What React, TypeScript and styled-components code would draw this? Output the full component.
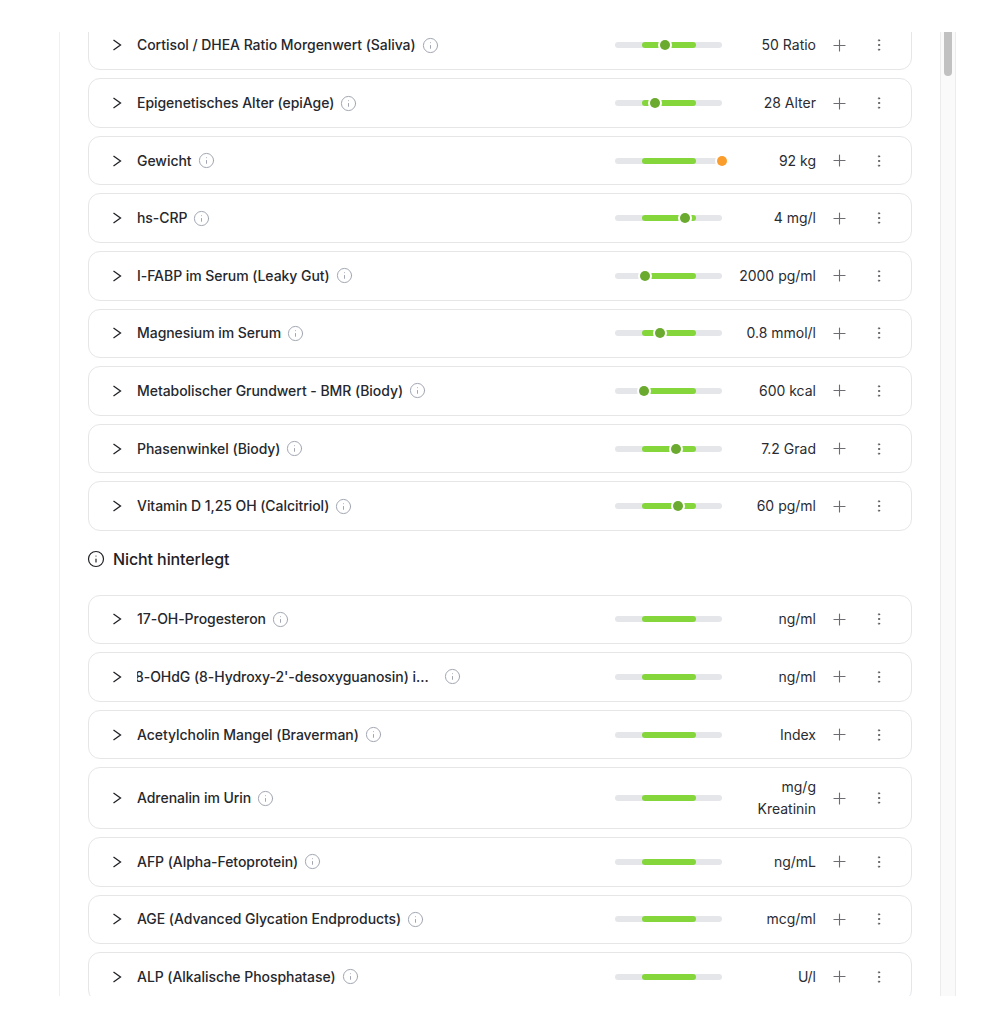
import { createGlobalStyle, styled } from "styled-components";
import { EllipsisVertical, Info, Plus } from "lucide-react";

const Global = createGlobalStyle`
  html, body {
    margin: 0;
    background: #fff;
  }
  body {
    font-family: Inter, "Liberation Sans", sans-serif;
    color: #1f2126;
  }
`;

const Page = styled.div`
  width: 1005px;
  height: 1028px;
  padding: 32px 49px 32px 59px;
  box-sizing: border-box;
  overflow: hidden;
`;

const Panel = styled.div`
  display: flex;
  height: 964px;
  border-left: 1px solid #f0f0f0;
  overflow: hidden;
`;

const Content = styled.div`
  flex: 1;
  min-width: 0;
  padding: 0 28px;
  overflow: hidden;
`;

const Scrolled = styled.div`
  margin-top: -11.4px;
`;

const Track = styled.div`
  width: 16px;
  flex-shrink: 0;
  padding-left: 3px;
  box-sizing: border-box;
  background: #fafafa;
  border-left: 1px solid #ececec;
  border-right: 1px solid #ececec;
`;

const Thumb = styled.div`
  width: 8px;
  height: 44px;
  background: #c1c1c1;
  border-radius: 0 0 4px 4px;
`;

const List = styled.div`
  display: flex;
  flex-direction: column;
  gap: 8px;
`;

const Card = styled.div`
  display: flex;
  align-items: center;
  min-height: 49.6px;
  padding: 7.8px 24px 7.8px 23px;
  box-sizing: border-box;
  background: #fff;
  border: 1px solid #e5e6e8;
  border-radius: 12px;
`;

const Toggle = styled.svg`
  flex-shrink: 0;
  width: 10px;
  height: 12px;
  fill: none;
  stroke: #1f2126;
  stroke-width: 1.3;
`;

const Name = styled.div`
  display: flex;
  align-items: center;
  gap: 6px;
  width: 478px;
  margin-left: 15px;
  font-size: 14px;
  font-weight: 500;
  line-height: 20px;
  letter-spacing: -0.05px;
  color: #26282d;
`;

const NameText = styled.span<{ $nudge?: boolean }>`
  overflow: hidden;
  white-space: nowrap;
  text-overflow: ellipsis;
  max-width: 301px;
  text-indent: ${(p) => (p.$nudge ? "-2px" : "0")};
`;

const Hint = styled(Info)`
  flex-shrink: 0;
  width: 17px;
  height: 17px;
  color: #a0a5b0;
`;

const Range = styled.div`
  position: relative;
  flex-shrink: 0;
  width: 107px;
  height: 6px;
  border-radius: 3px;
  background: #e5e6e9;
`;

const Band = styled.div`
  position: absolute;
  left: 27px;
  width: 54px;
  top: 0;
  bottom: 0;
  border-radius: 3px;
  background: #84d63a;
`;

const Dot = styled.div<{ $warn?: boolean }>`
  position: absolute;
  top: 50%;
  width: 10px;
  height: 10px;
  border-radius: 50%;
  transform: translate(-50%, -50%);
  background: ${(p) => (p.$warn ? "#fb9d2c" : "#6aaa2e")};
  box-shadow: 0 0 0 2px #fff;
`;

const Value = styled.div`
  flex: 1;
  min-width: 0;
  text-align: right;
  font-size: 14px;
  line-height: 22px;
  color: #2a2c31;
  padding-left: 12px;
`;

const Action = styled.div`
  display: flex;
  align-items: center;
  justify-content: center;
  flex-shrink: 0;
  width: 19px;
  margin-left: 14px;
  color: #6b6d72;
`;

const Menu = styled(Action)`
  width: 16px;
  margin-left: 22px;
  color: #55575c;
`;

const Heading = styled.h3`
  display: flex;
  align-items: center;
  gap: 8px;
  height: 63.6px;
  padding-bottom: 8px;
  box-sizing: border-box;
  margin: 0;
  font-size: 16px;
  font-weight: 500;
  letter-spacing: -0.1px;
  color: #1f2126;
`;

const HeadingIcon = styled(Info)`
  flex-shrink: 0;
  width: 18px;
  height: 18px;
  margin-left: -1px;
`;

type Row = { name: string; value?: string; at?: number; warn?: boolean; nudge?: boolean };

const filled: Row[] = [
  { name: "Cortisol / DHEA Ratio Morgenwert (Saliva)", value: "50 Ratio", at: 50 },
  { name: "Epigenetisches Alter (epiAge)", value: "28 Alter", at: 39.5 },
  { name: "Gewicht", value: "92 kg", at: 107, warn: true },
  { name: "hs-CRP", value: "4 mg/l", at: 70 },
  { name: "I-FABP im Serum (Leaky Gut)", value: "2000 pg/ml", at: 30 },
  { name: "Magnesium im Serum", value: "0.8 mmol/l", at: 45 },
  { name: "Metabolischer Grundwert - BMR (Biody)", value: "600 kcal", at: 29 },
  { name: "Phasenwinkel (Biody)", value: "7.2 Grad", at: 61 },
  { name: "Vitamin D 1,25 OH (Calcitriol)", value: "60 pg/ml", at: 63 },
];

const missing: Row[] = [
  { name: "17-OH-Progesteron", value: "ng/ml" },
  { name: "8-OHdG (8-Hydroxy-2'-desoxyguanosin) im Urin", value: "ng/ml", nudge: true },
  { name: "Acetylcholin Mangel (Braverman)", value: "Index" },
  { name: "Adrenalin im Urin", value: "mg/g Kreatinin" },
  { name: "AFP (Alpha-Fetoprotein)", value: "ng/mL" },
  { name: "AGE (Advanced Glycation Endproducts)", value: "mcg/ml" },
  { name: "ALP (Alkalische Phosphatase)", value: "U/l" },
];

function Marker({ row }: { row: Row }) {
  return (
    <Card>
      <Toggle viewBox="0 0 10 12">
        <path d="M1.5 1 L8.5 6 L1.5 11" />
      </Toggle>
      <Name>
        <NameText $nudge={row.nudge}>{row.name}</NameText>
        <Hint strokeWidth={1.4} />
      </Name>
      <Range>
        <Band />
        {row.at !== undefined && <Dot $warn={row.warn} style={{ left: row.at }} />}
      </Range>
      <Value>{row.value}</Value>
      <Action>
        <Plus size={19} strokeWidth={1.4} />
      </Action>
      <Menu>
        <EllipsisVertical size={16} strokeWidth={1.5} />
      </Menu>
    </Card>
  );
}

export default function App() {
  return (
    <Page>
      <Global />
      <Panel>
        <Content>
          <Scrolled>
            <List>
              {filled.map((row) => (
                <Marker key={row.name} row={row} />
              ))}
            </List>
            <Heading>
              <HeadingIcon strokeWidth={1.6} />
              Nicht hinterlegt
            </Heading>
            <List>
              {missing.map((row) => (
                <Marker key={row.name} row={row} />
              ))}
            </List>
          </Scrolled>
        </Content>
        <Track>
          <Thumb />
        </Track>
      </Panel>
    </Page>
  );
}
